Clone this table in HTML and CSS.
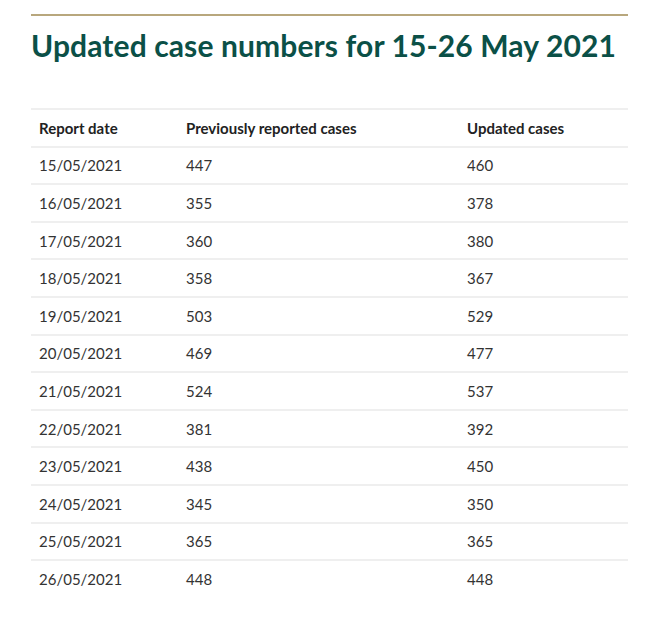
FILE: index.html
```html
<!DOCTYPE html>
<html>
<head>
<meta charset="utf-8">
<link rel="stylesheet" href="styles.css">
</head>
<body>
<div class="page">
  <div class="rule"></div>
  <h2 class="title">Updated case numbers for 15-26 May 2021</h2>
  <table class="cases">
    <thead>
      <tr><th class="c1">Report date</th><th class="c2">Previously reported cases</th><th class="c3">Updated cases</th></tr>
    </thead>
    <tbody>
      <tr><td>15/05/2021</td><td>447</td><td>460</td></tr>
      <tr><td>16/05/2021</td><td>355</td><td>378</td></tr>
      <tr><td>17/05/2021</td><td>360</td><td>380</td></tr>
      <tr><td>18/05/2021</td><td>358</td><td>367</td></tr>
      <tr><td>19/05/2021</td><td>503</td><td>529</td></tr>
      <tr><td>20/05/2021</td><td>469</td><td>477</td></tr>
      <tr><td>21/05/2021</td><td>524</td><td>537</td></tr>
      <tr><td>22/05/2021</td><td>381</td><td>392</td></tr>
      <tr><td>23/05/2021</td><td>438</td><td>450</td></tr>
      <tr><td>24/05/2021</td><td>345</td><td>350</td></tr>
      <tr><td>25/05/2021</td><td>365</td><td>365</td></tr>
      <tr><td>26/05/2021</td><td>448</td><td>448</td></tr>
    </tbody>
  </table>
</div>
</body>
</html>
```
FILE: styles.css
```css
html, body {
  margin: 0;
  padding: 0;
  background: #ffffff;
}
.page {
  width: 597px;
  margin-left: 31px;
  padding-top: 14px;
  font-family: Lato, "Liberation Sans", sans-serif;
}
.rule {
  height: 2px;
  background: #b8a77d;
}
.title {
  margin: 9px 0 0 0;
  font-size: 30px;
  line-height: 40px;
  font-weight: 700;
  color: #0b5047;
  letter-spacing: 0.12px;
}
.cases {
  width: 100%;
  margin-top: 43px;
  border-collapse: collapse;
  font-size: 15px;
  color: #333333;
}
.cases th, .cases td {
  text-align: left;
  padding: 0 8px;
  height: 35.6px;
  border-top: 2px solid #efefef;
  vertical-align: middle;
}
.cases th {
  font-weight: 700;
  color: #222222;
}
.c1 { width: 131px; }
.c2 { width: 265px; }
```
